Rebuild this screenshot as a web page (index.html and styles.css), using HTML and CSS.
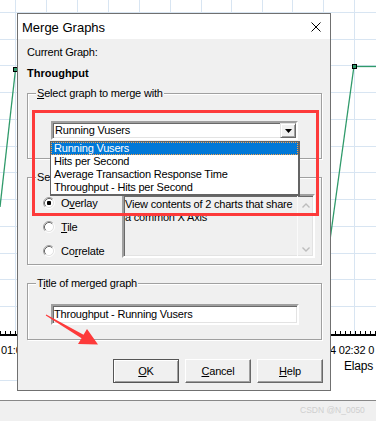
FILE: index.html
```html
<!DOCTYPE html>
<html>
<head>
<meta charset="utf-8">
<title>Merge Graphs</title>
<link rel="stylesheet" href="styles.css">
</head>
<body>
<div class="screen">
  <svg class="chart" width="376" height="421" viewBox="0 0 376 421">
    <defs>
      <pattern id="ticks" x="0" y="331" width="5" height="4" patternUnits="userSpaceOnUse">
        <rect x="0" y="0" width="1" height="4" fill="#000"/>
      </pattern>
    </defs>
    <rect x="0" y="0" width="376" height="400" fill="#fff"/>
    <g stroke="#d8e5f2" stroke-width="1" fill="none">
      <path d="M15.5 0V334M46.5 0V334M77.5 0V334M108.5 0V334M139.5 0V334M170.5 0V334M201.5 0V334M231.5 0V334M262.5 0V334M292.5 0V334M323.5 0V334M354.5 0V334"/>
      <path d="M0 12.5H376M0 39.5H376M0 65.5H376M0 92.5H376M0 119.5H376M0 146.5H376M0 172.5H376M0 199.5H376M0 226.5H376M0 253.5H376M0 279.5H376M0 306.5H376"/>
      <path d="M0 380.5H17"/>
    </g>
    <g stroke="#2f9a6a" stroke-width="1.3" fill="none">
      <path d="M15.5 69.5L0 207"/>
      <path d="M354 66.5H376"/>
      <path d="M354 66L330 240"/>
    </g>
    <rect x="13.5" y="67.5" width="4" height="4" fill="#2f9a6a" stroke="#000" stroke-width="1"/>
    <rect x="352.5" y="64.5" width="4" height="4" fill="#2f9a6a" stroke="#000" stroke-width="1"/>
    <rect x="0" y="334" width="376" height="2" fill="#000"/>
    <rect x="0" y="331" width="376" height="4" fill="url(#ticks)"/>
    <text x="1" y="354" class="axis-text">01:0</text>
    <text x="330" y="354" class="axis-text">4 02:32 0</text>
    <text x="344" y="369.5" class="axis-title">Elaps</text>
    <rect x="0" y="400" width="376" height="1" fill="#888"/>
    <rect x="0" y="401" width="376" height="20" fill="#f0f0f0"/>
    <text x="300" y="413" class="watermark">CSDN @N_0050</text>
  </svg>

  <div class="dialog">
    <div class="titlebar">
      <span class="title">Merge Graphs</span>
      <svg class="close" width="10" height="10" viewBox="0 0 10 10">
        <path d="M0.5 0.5L9.5 9.5M9.5 0.5L0.5 9.5" stroke="#000" stroke-width="1" fill="none"/>
      </svg>
    </div>
    <div class="body">
      <div class="current-label">Current Graph:</div>
      <div class="current">Throughput</div>

      <div class="group g1">
        <span class="glabel"><u>S</u>elect graph to merge with</span>
        <div class="combo">
          <span class="combo-text">Running Vusers</span>
          <span class="dropbtn">
            <svg width="7" height="4" viewBox="0 0 7 4"><path d="M0 0H7L3.5 4Z" fill="#000"/></svg>
          </span>
        </div>
      </div>

      <div class="group g2">
        <span class="glabel">Select merge type</span>
        <div class="radios">
          <div class="radio">
            <svg class="rb" width="12" height="12" viewBox="0 0 12 12">
              <circle cx="6" cy="6" r="4.5" fill="#fff"/>
              <path d="M2.11 9.89A5.5 5.5 0 0 1 9.89 2.11" stroke="#a0a0a0" fill="none"/>
              <path d="M2.82 9.18A4.5 4.5 0 0 1 9.18 2.82" stroke="#696969" fill="none"/>
              <path d="M9.89 2.11A5.5 5.5 0 0 1 2.11 9.89" stroke="#fff" fill="none"/>
              <path d="M9.18 2.82A4.5 4.5 0 0 1 2.82 9.18" stroke="#e3e3e3" fill="none"/>
              <rect x="4" y="4" width="4" height="4" rx="1" fill="#000"/>
            </svg>
            <span>O<u>v</u>erlay</span>
          </div>
          <div class="radio">
            <svg class="rb" width="12" height="12" viewBox="0 0 12 12">
              <circle cx="6" cy="6" r="4.5" fill="#fff"/>
              <path d="M2.11 9.89A5.5 5.5 0 0 1 9.89 2.11" stroke="#a0a0a0" fill="none"/>
              <path d="M2.82 9.18A4.5 4.5 0 0 1 9.18 2.82" stroke="#696969" fill="none"/>
              <path d="M9.89 2.11A5.5 5.5 0 0 1 2.11 9.89" stroke="#fff" fill="none"/>
              <path d="M9.18 2.82A4.5 4.5 0 0 1 2.82 9.18" stroke="#e3e3e3" fill="none"/>
            </svg>
            <span><u>T</u>ile</span>
          </div>
          <div class="radio">
            <svg class="rb" width="12" height="12" viewBox="0 0 12 12">
              <circle cx="6" cy="6" r="4.5" fill="#fff"/>
              <path d="M2.11 9.89A5.5 5.5 0 0 1 9.89 2.11" stroke="#a0a0a0" fill="none"/>
              <path d="M2.82 9.18A4.5 4.5 0 0 1 9.18 2.82" stroke="#696969" fill="none"/>
              <path d="M9.89 2.11A5.5 5.5 0 0 1 2.11 9.89" stroke="#fff" fill="none"/>
              <path d="M9.18 2.82A4.5 4.5 0 0 1 2.82 9.18" stroke="#e3e3e3" fill="none"/>
            </svg>
            <span>Co<u>r</u>relate</span>
          </div>
        </div>
        <div class="desc">
          <div class="desc-text">View contents of 2 charts that share<br>a common X Axis</div>
          <div class="scroll">
            <svg width="8" height="5" viewBox="0 0 8 5"><path d="M0.5 4.5L4 1L7.5 4.5" stroke="#bdbdbd" stroke-width="1.4" fill="none"/></svg>
            <svg width="8" height="5" viewBox="0 0 8 5"><path d="M0.5 0.5L4 4L7.5 0.5" stroke="#bdbdbd" stroke-width="1.4" fill="none"/></svg>
          </div>
        </div>
      </div>

      <div class="group g3">
        <span class="glabel">T<u>i</u>tle of merged graph</span>
        <div class="textbox">Throughput - Running Vusers</div>
      </div>

      <div class="buttons">
        <div class="btn default"><span><u>O</u>K</span></div>
        <div class="btn"><span><u>C</u>ancel</span></div>
        <div class="btn"><span><u>H</u>elp</span></div>
      </div>

      <div class="droplist">
        <div class="item sel">Running Vusers</div>
        <div class="item">Hits per Second</div>
        <div class="item">Average Transaction Response Time</div>
        <div class="item">Throughput - Hits per Second</div>
      </div>
    </div>
  </div>

  <div class="annot-rect"></div>
  <svg class="annot-arrow" width="65" height="42" viewBox="40 308 65 42">
    <polygon points="46.2,314.4 83.5,334.7 87,329 98,344.5 78,344 81.5,338.3 45.8,315.6" fill="#fd3a3a"/>
  </svg>
</div>
</body>
</html>
```

FILE: styles.css
```css
* {
  box-sizing: border-box;
}

html,
body {
  margin: 0;
  padding: 0;
}

body {
  width: 376px;
  height: 421px;
  overflow: hidden;
  background: #fff;
  color: #000;
  font-family: "Liberation Sans", Arial, sans-serif;
  font-size: 11px;
  letter-spacing: -0.2px;
}

.screen {
  position: relative;
  width: 376px;
  height: 421px;
  overflow: hidden;
}

.chart {
  position: absolute;
  left: 0;
  top: 0;
  display: block;
}

.axis-text {
  font-family: "Liberation Sans", Arial, sans-serif;
  font-size: 11px;
  fill: #000;
}

.axis-title {
  font-family: "Liberation Sans", Arial, sans-serif;
  font-size: 12px;
  fill: #000;
}

.watermark {
  font-family: "Liberation Sans", Arial, sans-serif;
  font-size: 8.5px;
  fill: #cfcfcf;
  letter-spacing: 0;
}

/* dialog window */
.dialog {
  position: absolute;
  left: 17px;
  top: 13px;
  width: 314px;
  height: 378px;
  border: 1px solid #707070;
  background: #f0f0f0;
  display: flex;
  flex-direction: column;
}

.titlebar {
  height: 25px;
  flex: none;
  background: #fff;
  display: flex;
  align-items: center;
  justify-content: space-between;
  padding: 0 9px 0 4px;
  font-size: 13px;
  letter-spacing: 0;
}

.title {
  line-height: 15px;
  padding-top: 1px;
}

.close {
  display: block;
}

.body {
  position: relative;
  flex: 1;
  padding: 7px 8px 7px 9px;
  line-height: 13px;
}

.current {
  margin-top: 8px;
  font-weight: bold;
  letter-spacing: 0;
}

/* etched group boxes */
.group {
  position: relative;
  border: 1px solid #a0a0a0;
  box-shadow: inset 1px 1px 0 #fff, 1px 1px 0 #fff;
}

.glabel {
  position: absolute;
  top: -7px;
  left: 8px;
  padding: 0 1px;
  background: #f0f0f0;
  line-height: 13px;
  white-space: nowrap;
}

.g1 {
  margin-top: 13px;
  height: 66px;
  padding: 27px 23px 0 23px;
}

.combo {
  height: 19px;
  display: flex;
  align-items: center;
  justify-content: space-between;
  background: #fff;
  border: 2px solid;
  border-color: #a0a0a0 #fff #fff #a0a0a0;
  box-shadow: inset 1px 1px 0 #696969, inset -1px -1px 0 #e3e3e3;
  padding-left: 2px;
}

.combo-text {
  line-height: 13px;
}

.dropbtn {
  width: 16px;
  height: 15px;
  display: flex;
  align-items: center;
  justify-content: center;
  background: #f0f0f0;
  border: 1px solid;
  border-color: #e3e3e3 #696969 #696969 #e3e3e3;
  box-shadow: inset 1px 1px 0 #fff, inset -1px -1px 0 #a0a0a0;
}

.dropbtn svg {
  display: block;
}

.g2 {
  margin-top: 18px;
  height: 88px;
  display: flex;
}

.radios {
  width: 94px;
  flex: none;
  padding: 13px 0 0 15px;
  display: flex;
  flex-direction: column;
}

.radio {
  height: 24px;
  display: flex;
  align-items: center;
  gap: 6px;
}

.rb {
  display: block;
  flex: none;
}

.desc {
  margin-top: 16px;
  width: 193px;
  height: 64px;
  display: flex;
  background: #f0f0f0;
  border: 2px solid;
  border-color: #a0a0a0 #fff #fff #a0a0a0;
  box-shadow: inset 1px 1px 0 #696969, inset -1px -1px 0 #e3e3e3;
}

.desc-text {
  flex: 1;
  padding: 2px 0 0 1px;
  white-space: nowrap;
  overflow: hidden;
}

.scroll {
  width: 16px;
  flex: none;
  display: flex;
  flex-direction: column;
  justify-content: space-between;
  align-items: center;
  padding: 7px 0 4px;
  border-left: 1px solid #fafafa;
}

.scroll svg {
  display: block;
}

.g3 {
  margin-top: 18px;
  height: 57px;
  padding: 20px 23px 0 23px;
}

.textbox {
  width: 248px;
  height: 21px;
  background: #fff;
  border: 2px solid;
  border-color: #a0a0a0 #fff #fff #a0a0a0;
  box-shadow: inset 1px 1px 0 #696969, inset -1px -1px 0 #e3e3e3;
  padding-left: 1px;
  line-height: 17px;
  white-space: nowrap;
}

/* buttons */
.buttons {
  margin-top: 19px;
  margin-right: -1px;
  display: flex;
  justify-content: flex-end;
  gap: 6px;
}

.btn {
  width: 66px;
  height: 24px;
  display: flex;
  align-items: center;
  justify-content: center;
  background: #f0f0f0;
  border: 1px solid;
  border-color: #fff #696969 #696969 #fff;
  box-shadow: inset -1px -1px 0 #a0a0a0;
  padding-top: 1px;
}

.btn.default {
  border-color: #555;
  box-shadow: inset 1px 1px 0 #fff, inset -1px -1px 0 #a0a0a0;
}

/* open drop-down list */
.droplist {
  position: absolute;
  left: 32px;
  top: 102px;
  width: 250px;
  height: 55px;
  background: #fff;
  border: 1px solid #646464;
  border-right-width: 2px;
  border-bottom-width: 2px;
  z-index: 2;
}

.item {
  height: 13px;
  line-height: 13px;
  padding-left: 3px;
  white-space: nowrap;
}

.item.sel {
  background: #0078d7;
  color: #fff;
  outline: 1px dotted #f5a04a;
  outline-offset: -1px;
}

/* annotations */
.annot-rect {
  position: absolute;
  left: 32px;
  top: 110px;
  width: 287px;
  height: 106px;
  border: 3px solid #fd3a3a;
  pointer-events: none;
}

.annot-arrow {
  position: absolute;
  left: 40px;
  top: 308px;
  display: block;
  pointer-events: none;
}
```
